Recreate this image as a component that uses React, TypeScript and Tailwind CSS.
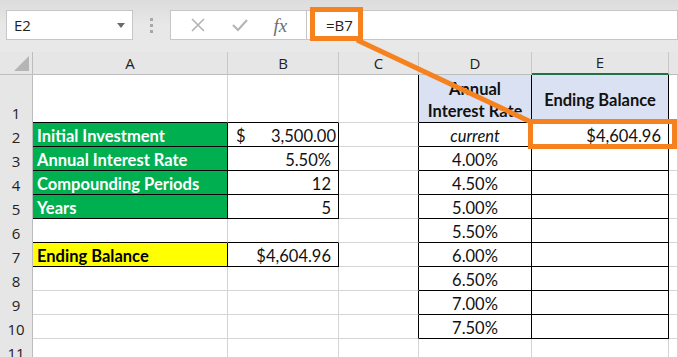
import React from 'react';

type Cell = {
  text?: string;
  kind?: 'green' | 'yellow' | 'blue';
  align?: 'left' | 'right' | 'center';
  italic?: boolean;
  money?: boolean;
};

const COLS = ['A', 'B', 'C', 'D', 'E', ''];

// rows 1..11, columns A..F
const sheet: Cell[][] = [
  [{}, {}, {}, { text: 'Annual\nInterest Rate', kind: 'blue', align: 'center' }, { text: 'Ending Balance', kind: 'blue', align: 'center' }, {}],
  [{ text: 'Initial Investment', kind: 'green' }, { text: '3,500.00', money: true }, {}, { text: 'current', align: 'center', italic: true }, { text: '$4,604.96', align: 'right' }, {}],
  [{ text: 'Annual Interest Rate', kind: 'green' }, { text: '5.50%', align: 'right' }, {}, { text: '4.00%', align: 'center' }, {}, {}],
  [{ text: 'Compounding Periods', kind: 'green' }, { text: '12', align: 'right' }, {}, { text: '4.50%', align: 'center' }, {}, {}],
  [{ text: 'Years', kind: 'green' }, { text: '5', align: 'right' }, {}, { text: '5.00%', align: 'center' }, {}, {}],
  [{}, {}, {}, { text: '5.50%', align: 'center' }, {}, {}],
  [{ text: 'Ending Balance', kind: 'yellow' }, { text: '$4,604.96', align: 'right' }, {}, { text: '6.00%', align: 'center' }, {}, {}],
  [{}, {}, {}, { text: '6.50%', align: 'center' }, {}, {}],
  [{}, {}, {}, { text: '7.00%', align: 'center' }, {}, {}],
  [{}, {}, {}, { text: '7.50%', align: 'center' }, {}, {}],
  [{}, {}, {}, {}, {}, {}],
];

// cells that carry a black border
const bordered = (r: number, c: number) => {
  if (r < 0 || r > 10 || c < 0 || c > 5) return false;
  if ((c === 0 || c === 1) && r >= 1 && r <= 4) return true;
  if ((c === 0 || c === 1) && r === 6) return true;
  if ((c === 3 || c === 4) && r >= 0 && r <= 9) return true;
  return false;
};

function SheetCell({ cell, r, c }: { cell: Cell; r: number; c: number }) {
  const right = bordered(r, c) || bordered(r, c + 1) ? 'border-r-black' : 'border-r-[#d4d4d4]';
  const bottom = bordered(r, c) || bordered(r + 1, c) ? 'border-b-black' : 'border-b-[#d4d4d4]';
  const bg =
    cell.kind === 'green'
      ? 'bg-[#00b050] text-white font-bold'
      : cell.kind === 'yellow'
        ? 'bg-[#ffff00] text-black font-bold'
        : cell.kind === 'blue'
          ? 'bg-[#d9e1f2] text-[#111] font-bold'
          : 'bg-white text-[#111]';
  const align =
    cell.align === 'center' ? 'justify-center text-center' : cell.align === 'right' ? 'justify-end pr-[7px]' : 'justify-start pl-[4px]';
  const vert = r === 0 ? (c === 3 ? 'items-end leading-[22px] pb-0' : 'items-center leading-[22px] pt-[2px]') : 'items-end leading-[20px] pb-0';

  return (
    <div className={`flex border-r border-b ${right} ${bottom} ${bg} ${vert} ${align} overflow-visible whitespace-pre`}>
      {cell.money ? (
        <div className="flex w-full justify-between pl-[4px] pr-[2px]">
          <span>$</span>
          <span>{cell.text}</span>
        </div>
      ) : (
        <span className={cell.italic ? 'italic' : ''}>{cell.text}</span>
      )}
    </div>
  );
}

export default function App() {
  return (
    <div className="relative w-[678px] h-[357px] overflow-hidden bg-[#e6e6e6] font-['Lato','Liberation_Sans',sans-serif]">
      {/* formula bar */}
      <div className="h-[52px] bg-gradient-to-b from-[#dcdcdc] via-[#e8e8e8] to-[#e8e8e8] pt-[10px] pl-[6px] flex items-start">
        <div className="w-[127px] h-[30px] bg-white border border-[#c6c6c6] flex items-center justify-between pl-[7px] pr-[7px] font-['Open_Sans',sans-serif] text-[15px] text-[#222]">
          <span>E2</span>
          <svg width="8" height="5" viewBox="0 0 8 5"><path d="M0 0h8L4 5z" fill="#6b6b6b" /></svg>
        </div>
        <div className="w-[37px] h-[30px] flex flex-col items-center justify-center gap-[3px]">
          <span className="w-[3px] h-[3px] bg-[#a8a8a8]" />
          <span className="w-[3px] h-[3px] bg-[#a8a8a8]" />
          <span className="w-[3px] h-[3px] bg-[#a8a8a8]" />
        </div>
        <div className="w-[137px] h-[30px] bg-white border border-[#c6c6c6] flex items-center justify-around px-[6px]">
          <svg width="16" height="16" viewBox="0 0 16 16"><path d="M2 2l12 12M14 2L2 14" stroke="#b3b3b3" strokeWidth="1.6" /></svg>
          <svg width="16" height="14" viewBox="0 0 16 14"><path d="M1 7l5 5L15 2" stroke="#b3b3b3" strokeWidth="2" fill="none" /></svg>
          <span className="font-['Liberation_Serif',serif] italic text-[19px] text-[#6e6e6e] leading-none">fx</span>
        </div>
        <div className="flex-1 h-[30px] bg-white border border-[#c6c6c6] border-l-0 flex items-center pl-[19px] font-['Open_Sans',sans-serif] text-[15px] text-[#222]">
          =B7
        </div>
      </div>

      {/* sheet */}
      <div className="grid grid-cols-[33px_195px_111px_80px_113px_137px_1fr] grid-rows-[23px_48px_repeat(11,24px)] text-[16.5px]">
        <div className="relative bg-[#e6e6e6] border-r border-b border-[#bdbdbd]">
          <svg className="absolute right-[3px] bottom-[3px]" width="15" height="15" viewBox="0 0 15 15"><path d="M15 0V15H0z" fill="#b5b5b5" /></svg>
        </div>
        {COLS.map((col, i) => (
          <div
            key={i}
            className={`flex items-center justify-center bg-[#e6e6e6] font-['Open_Sans',sans-serif] text-[15px] text-[#222] border-b ${
              col === 'E' ? 'border-b-2 border-b-[#217346]' : 'border-b-[#bdbdbd]'
            } ${i < 5 ? 'border-r border-r-[#c8c8c8]' : ''}`}
          >
            {col}
          </div>
        ))}
        {sheet.map((row, r) => (
          <React.Fragment key={r}>
            <div className="flex items-end justify-center leading-[20px] bg-[#e6e6e6] border-r border-[#bdbdbd] font-['Open_Sans',sans-serif] text-[15px] text-[#222]">
              {r + 1}
            </div>
            {row.map((cell, c) => (
              <SheetCell key={c} cell={cell} r={r} c={c} />
            ))}
          </React.Fragment>
        ))}
      </div>

      {/* callout annotation */}
      <svg className="absolute inset-0 pointer-events-none" width="678" height="357">
        <rect x="312.5" y="9.5" width="48" height="29" fill="none" stroke="#f5821f" strokeWidth="5" />
        <line x1="357" y1="40" x2="531" y2="122" stroke="#f5821f" strokeWidth="5" />
        <rect x="530.5" y="121.5" width="144" height="25" fill="none" stroke="#f5821f" strokeWidth="5" />
      </svg>
    </div>
  );
}
